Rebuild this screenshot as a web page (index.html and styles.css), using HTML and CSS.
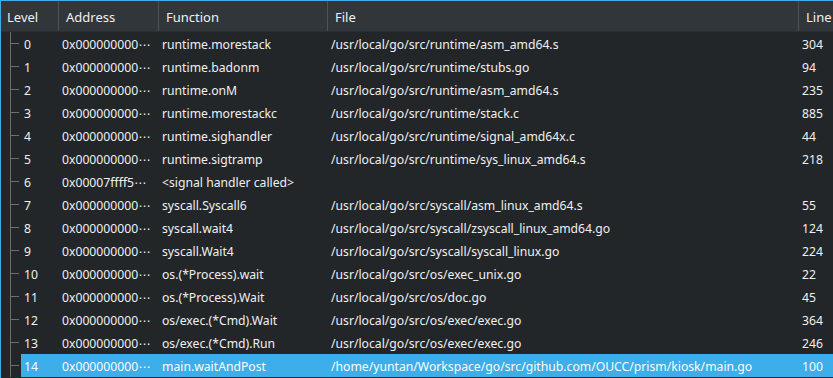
FILE: index.html
```html
<!DOCTYPE html>
<html lang="en">
  <head>
    <meta charset="UTF-8" />
    <title>Call Stack</title>
    <link rel="stylesheet" href="styles.css">
  </head>
  <body>
    <div class="view">
      <div class="header">
        <div class="hcell h-level">Level</div>
        <div class="hcell h-addr">Address</div>
        <div class="hcell h-fn">Function</div>
        <div class="hcell h-file">File</div>
        <div class="hcell h-line">Line</div>
      </div>

      <div class="rows">
        <div class="row"><span class="branch"></span><div class="cells"><span class="c-level">0</span><span class="c-addr">0x000000000⋯</span><span class="c-fn">runtime.morestack</span><span class="c-file">/usr/local/go/src/runtime/asm_amd64.s</span><span class="c-line">304</span></div></div>
        <div class="row"><span class="branch"></span><div class="cells"><span class="c-level">1</span><span class="c-addr">0x000000000⋯</span><span class="c-fn">runtime.badonm</span><span class="c-file">/usr/local/go/src/runtime/stubs.go</span><span class="c-line">94</span></div></div>
        <div class="row"><span class="branch"></span><div class="cells"><span class="c-level">2</span><span class="c-addr">0x000000000⋯</span><span class="c-fn">runtime.onM</span><span class="c-file">/usr/local/go/src/runtime/asm_amd64.s</span><span class="c-line">235</span></div></div>
        <div class="row"><span class="branch"></span><div class="cells"><span class="c-level">3</span><span class="c-addr">0x000000000⋯</span><span class="c-fn">runtime.morestackc</span><span class="c-file">/usr/local/go/src/runtime/stack.c</span><span class="c-line">885</span></div></div>
        <div class="row"><span class="branch"></span><div class="cells"><span class="c-level">4</span><span class="c-addr">0x000000000⋯</span><span class="c-fn">runtime.sighandler</span><span class="c-file">/usr/local/go/src/runtime/signal_amd64x.c</span><span class="c-line">44</span></div></div>
        <div class="row"><span class="branch"></span><div class="cells"><span class="c-level">5</span><span class="c-addr">0x000000000⋯</span><span class="c-fn">runtime.sigtramp</span><span class="c-file">/usr/local/go/src/runtime/sys_linux_amd64.s</span><span class="c-line">218</span></div></div>
        <div class="row"><span class="branch"></span><div class="cells"><span class="c-level">6</span><span class="c-addr">0x00007ffff5⋯</span><span class="c-fn">&lt;signal handler called&gt;</span><span class="c-file"></span><span class="c-line"></span></div></div>
        <div class="row"><span class="branch"></span><div class="cells"><span class="c-level">7</span><span class="c-addr">0x000000000⋯</span><span class="c-fn">syscall.Syscall6</span><span class="c-file">/usr/local/go/src/syscall/asm_linux_amd64.s</span><span class="c-line">55</span></div></div>
        <div class="row"><span class="branch"></span><div class="cells"><span class="c-level">8</span><span class="c-addr">0x000000000⋯</span><span class="c-fn">syscall.wait4</span><span class="c-file">/usr/local/go/src/syscall/zsyscall_linux_amd64.go</span><span class="c-line">124</span></div></div>
        <div class="row"><span class="branch"></span><div class="cells"><span class="c-level">9</span><span class="c-addr">0x000000000⋯</span><span class="c-fn">syscall.Wait4</span><span class="c-file">/usr/local/go/src/syscall/syscall_linux.go</span><span class="c-line">224</span></div></div>
        <div class="row"><span class="branch"></span><div class="cells"><span class="c-level">10</span><span class="c-addr">0x000000000⋯</span><span class="c-fn">os.(*Process).wait</span><span class="c-file">/usr/local/go/src/os/exec_unix.go</span><span class="c-line">22</span></div></div>
        <div class="row"><span class="branch"></span><div class="cells"><span class="c-level">11</span><span class="c-addr">0x000000000⋯</span><span class="c-fn">os.(*Process).Wait</span><span class="c-file">/usr/local/go/src/os/doc.go</span><span class="c-line">45</span></div></div>
        <div class="row"><span class="branch"></span><div class="cells"><span class="c-level">12</span><span class="c-addr">0x000000000⋯</span><span class="c-fn">os/exec.(*Cmd).Wait</span><span class="c-file">/usr/local/go/src/os/exec/exec.go</span><span class="c-line">364</span></div></div>
        <div class="row"><span class="branch"></span><div class="cells"><span class="c-level">13</span><span class="c-addr">0x000000000⋯</span><span class="c-fn">os/exec.(*Cmd).Run</span><span class="c-file">/usr/local/go/src/os/exec/exec.go</span><span class="c-line">246</span></div></div>
        <div class="row"><span class="branch"></span><div class="cells selected"><span class="c-level">14</span><span class="c-addr">0x000000000⋯</span><span class="c-fn">main.waitAndPost</span><span class="c-file">/home/yuntan/Workspace/go/src/github.com/OUCC/prism/kiosk/main.go</span><span class="c-line">100</span></div></div>
      </div>
    </div>
  </body>
</html>
```

FILE: styles.css
```css
:root {
  --view-bg: #232629;
  --header-bg: #31363b;
  --focus: #3daee9;
  --text: #eff0f1;
  --divider: #4d5257;
  --tree-line: #6a6e72;
}

* {
  box-sizing: border-box;
  margin: 0;
  padding: 0;
}

html,
body {
  height: 100%;
}

body {
  background-color: var(--view-bg);
  color: var(--text);
  font-family: "Noto Sans", "DejaVu Sans", sans-serif;
  font-size: 13px;
  overflow: hidden;
}

.view {
  height: 100%;
  border-top: 1px solid var(--focus);
  border-left: 1px solid var(--focus);
  display: flex;
  flex-direction: column;
}

/* column header */
.header {
  display: flex;
  height: 31px;
  background-color: var(--header-bg);
  border-bottom: 1px solid #2b2f33;
}

.hcell {
  display: flex;
  align-items: center;
  padding-left: 7px;
  padding-top: 2px;
  border-left: 1px solid var(--divider);
  white-space: nowrap;
}

.h-level {
  width: 57px;
  padding-left: 6px;
  border-left: none;
}

.h-addr {
  width: 100px;
}

.h-fn {
  width: 169px;
}

.h-file {
  width: 471px;
}

.h-line {
  flex: 1;
}

/* rows */
.rows {
  display: flex;
  flex-direction: column;
}

.row {
  display: flex;
  height: 23px;
}

.branch {
  flex: none;
  width: 20px;
  background:
    linear-gradient(var(--tree-line), var(--tree-line)) 9px 0 / 1px 100% no-repeat,
    linear-gradient(var(--tree-line), var(--tree-line)) 10px 11px / 8px 1px no-repeat;
}

.cells {
  flex: 1;
  display: flex;
  align-items: center;
  white-space: nowrap;
  font-size: 12.2px;
  padding-top: 1px;
}

.cells > span {
  overflow: hidden;
  padding-left: 4px;
}

.c-level {
  width: 37px;
  padding-left: 3px !important;
}

.c-addr {
  width: 100px;
}

.c-fn {
  width: 169px;
}

.c-file {
  width: 471px;
}

.c-line {
  flex: 1;
}

.selected {
  background-color: var(--focus);
  color: #fcfcfc;
}
```
